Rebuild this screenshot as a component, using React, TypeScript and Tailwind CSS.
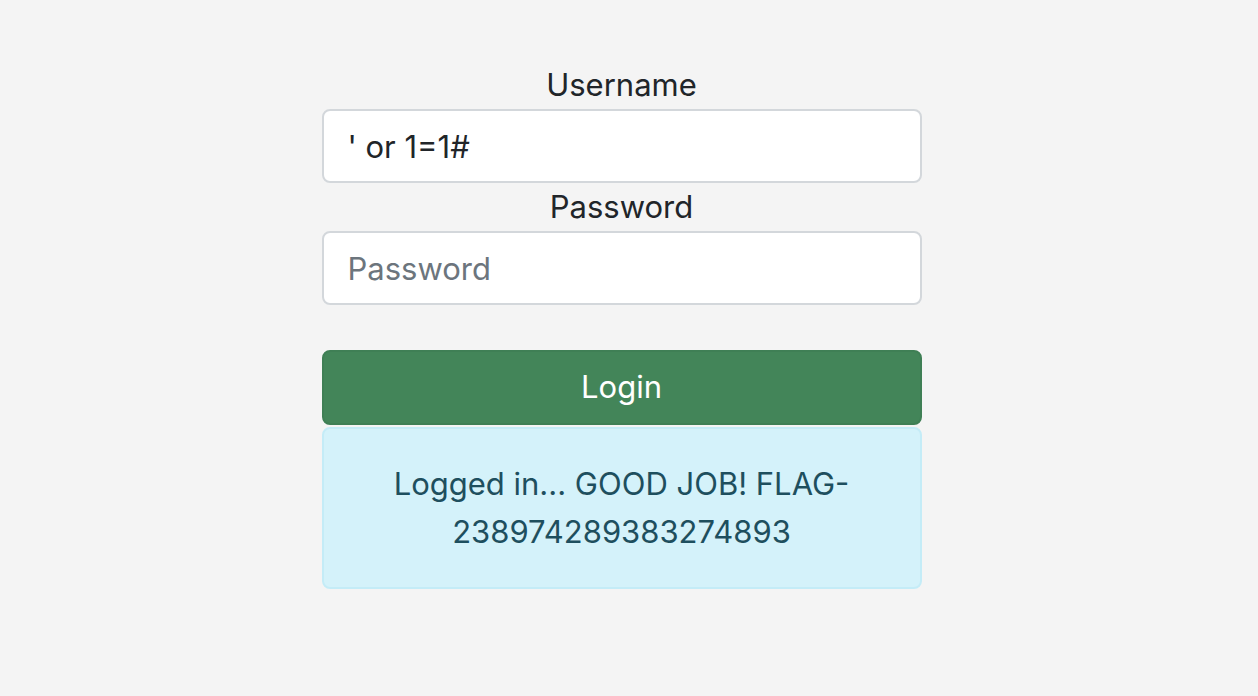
import { useState } from 'react';

const App = () => {
  const [username, setUsername] = useState("' or 1=1#");
  const [password, setPassword] = useState('');

  return (
    <div
      className="min-h-screen bg-[#f4f4f4] text-[#212529]"
      style={{ fontFamily: 'Inter, "Liberation Sans", sans-serif' }}
    >
      <div className="flex justify-center pr-[15px] pt-[61px]">
        <form className="w-[600px] flex flex-col" onSubmit={(e) => e.preventDefault()}>
          {/* Username */}
          <label htmlFor="username" className="block text-center text-[31px] leading-[48px]">
            Username
          </label>
          <input
            id="username"
            type="text"
            value={username}
            onChange={(e) => setUsername(e.target.value)}
            placeholder="Username"
            className="block w-full h-[74px] px-[24px] text-[31px] bg-white border-2 border-[#d3d7db] rounded-[8px] outline-none placeholder:text-[#6c757d]"
          />

          {/* Password */}
          <label htmlFor="password" className="block text-center text-[31px] leading-[48px]">
            Password
          </label>
          <input
            id="password"
            type="password"
            value={password}
            onChange={(e) => setPassword(e.target.value)}
            placeholder="Password"
            className="block w-full h-[74px] px-[24px] text-[31px] bg-white border-2 border-[#d3d7db] rounded-[8px] outline-none placeholder:text-[#6c757d]"
          />

          <button
            type="submit"
            className="mt-[45px] w-full h-[75px] rounded-[8px] bg-[#438559] border-2 border-[#3f7f55] text-white text-[31px]"
          >
            Login
          </button>

          {/* Result */}
          <div className="mt-[2px] w-full px-[32px] py-[31px] rounded-[8px] bg-[#d4f2fa] border-2 border-[#c4ecf7] text-[#1e4f5e] text-center text-[31px] leading-[48px]">
            Logged in... GOOD JOB! FLAG-238974289383274893
          </div>
        </form>
      </div>
    </div>
  );
};

export default App;
